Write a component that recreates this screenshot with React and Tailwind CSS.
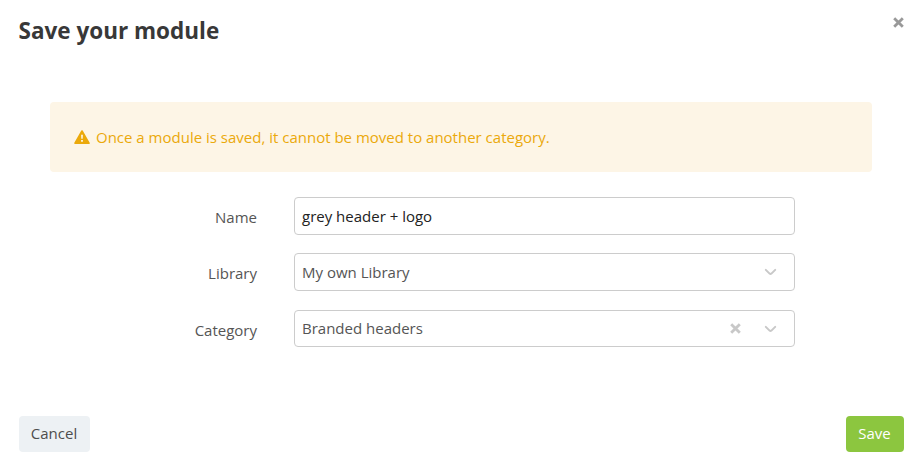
import React from 'react';

const fields = [
  { label: 'Name', value: 'grey header + logo', type: 'input', spacing: 'h-[38px]', textOffset: 'mt-[6px]' },
  { label: 'Library', value: 'My own Library', type: 'select', spacing: 'h-[38px] mt-[18px]', textOffset: 'mt-[6px]' },
  { label: 'Category', value: 'Branded headers', type: 'select', clearable: true, spacing: 'h-[37px] mt-[19px]', textOffset: 'mt-[5px]' },
];

function CloseIcon({ className }) {
  return (
    <svg className={className} viewBox="0 0 11 11" fill="none" stroke="currentColor" strokeWidth="2.8">
      <path d="M1.2 1.2 9.8 9.8M9.8 1.2 1.2 9.8" />
    </svg>
  );
}

function ChevronIcon() {
  return (
    <svg className="h-[8px] w-[13px]" viewBox="0 0 13 8" fill="none" stroke="currentColor" strokeWidth="2" strokeLinecap="round" strokeLinejoin="round">
      <path d="M1.8 1.9 5.6 5.6Q6.5 6.4 7.4 5.6L11.2 1.9" />
    </svg>
  );
}

function WarningIcon() {
  return (
    <svg className="h-[15px] w-[16px]" viewBox="0 0 16 15">
      <path
        d="M8 1 15 13.2H1Z"
        fill="#eba90b"
        stroke="#eba90b"
        strokeWidth="1.6"
        strokeLinejoin="round"
      />
      <path d="M7.1 4.8H8.9L8.7 8.8H7.3ZM7.1 10H8.9V11.7H7.1Z" fill="#fdf5e6" />
    </svg>
  );
}

function Field({ label, value, type, clearable, spacing, textOffset }) {
  return (
    <div className={`flex ${spacing}`}>
      <label className="w-[257px] pt-[8px] text-right text-[15px] leading-[24px] text-[#555555]">
        {label}
      </label>
      <div className="ml-[37px] flex w-[501px] items-start rounded-[4px] border border-[#cccccc] bg-white pl-[7px] pr-[17px]">
        <span className={`flex-1 text-[15px] leading-[24px] ${textOffset} ${type === 'input' ? 'text-[#222222]' : 'text-[#555555]'}`}>
          {value}
        </span>
        {type === 'select' && (
          <div className="flex h-full items-center text-[#c8c8c8]">
            {clearable && <CloseIcon className="mr-[23px] h-[11px] w-[11px]" />}
            <ChevronIcon />
          </div>
        )}
      </div>
    </div>
  );
}

function App() {
  return (
    <div className="flex h-[472px] w-[923px] flex-col bg-white font-['Open_Sans',sans-serif]">
      <header className="flex h-[102px] items-start justify-between pl-[18.5px] pr-[19px]">
        <h1 className="mt-[15px] text-[22.5px] font-bold leading-[32px] text-[#383838]">Save your module</h1>
        <button className="mt-[17px] text-[#999999]">
          <CloseIcon className="h-[11px] w-[11px]" />
        </button>
      </header>

      <div className="ml-[50px] flex h-[70px] w-[822px] items-center rounded-[4px] bg-[#fdf5e6] pl-[24px] text-[#eba90b]">
        <WarningIcon />
        <p className="ml-[6px] text-[15px] leading-[24px]">
          Once a module is saved, it cannot be moved to another category.
        </p>
      </div>

      <form className="mt-[25px]">
        {fields.map((field) => (
          <Field key={field.label} {...field} />
        ))}
      </form>

      <footer className="mt-auto mb-[20px] flex justify-between pl-[18.5px] pr-[19.5px]">
        <button className="h-[36px] w-[71px] rounded-[4px] bg-[#edf1f4] pb-[2px] text-[15px] text-[#4d4d4d]">Cancel</button>
        <button className="h-[36px] w-[58px] rounded-[4px] bg-[#8cc63f] pb-[2px] text-[15px] text-white">Save</button>
      </footer>
    </div>
  );
}

export default App;
